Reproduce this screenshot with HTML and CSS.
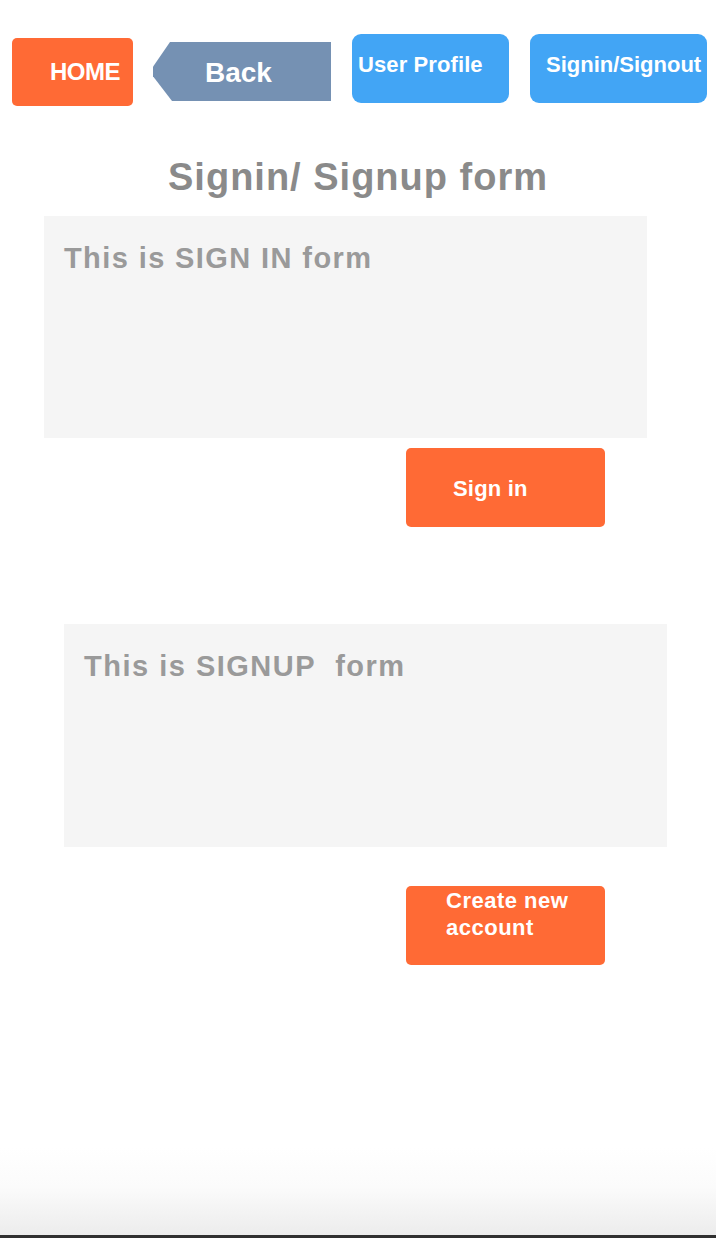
FILE: index.html
```html
<!DOCTYPE html>
<html>
<head>
<meta charset="utf-8">
<title>Signin/ Signup form</title>
<link rel="stylesheet" href="styles.css">
</head>
<body>
<div class="page">
  <nav class="nav">
    <a class="btn-home">HOME</a>
    <a class="btn-back">Back</a>
    <a class="btn-blue btn-profile">User Profile</a>
    <a class="btn-blue btn-sign">Signin/Signout</a>
  </nav>
  <h1 class="title">Signin/ Signup form</h1>
  <section class="form-box form-signin">
    <p class="form-text">This is SIGN IN form</p>
  </section>
  <div class="action">
    <button class="btn-orange btn-signin">Sign in</button>
  </div>
  <section class="form-box form-signup">
    <p class="form-text">This is SIGNUP&nbsp; form</p>
  </section>
  <div class="action action-create">
    <button class="btn-orange btn-create"><span class="create-label">Create new account</span></button>
  </div>
  <footer class="bottom"></footer>
</div>
</body>
</html>
```
FILE: styles.css
```css
* { box-sizing: border-box; }
html, body { margin: 0; padding: 0; background: #fff; }
body { font-family: "Liberation Sans", Arial, sans-serif; }

.page {
  min-height: 100vh;
  display: flex;
  flex-direction: column;
}

.nav {
  display: flex;
  align-items: flex-start;
  padding: 34px 0 0 12px;
  height: 107px;
}

.btn-home {
  margin-top: 4px;
  width: 121px;
  height: 68px;
  background: #ff6a35;
  border-radius: 5px;
  color: #fff;
  font-weight: bold;
  font-size: 24px;
  display: flex;
  align-items: center;
  padding-left: 38px;
  letter-spacing: -0.5px;
}

.btn-back {
  margin-top: 8px;
  margin-left: 19px;
  width: 179px;
  height: 59px;
  background: #7591b3;
  clip-path: polygon(18px 0, 100% 0, 100% 100%, 20px 100%, 1px 58%, 1px 42%);
  color: #fff;
  font-weight: bold;
  font-size: 28px;
  display: flex;
  align-items: center;
  padding-left: 53px;
  padding-top: 2px;
}

.btn-blue {
  height: 69px;
  background: #42a5f5;
  border-radius: 9px;
  color: #fff;
  font-weight: bold;
  font-size: 22px;
  display: flex;
  align-items: center;
  padding-bottom: 8px;
  letter-spacing: 0;
}

.btn-profile {
  margin-left: 21px;
  width: 157px;
  padding-left: 6px;
  letter-spacing: 0.1px;
}

.btn-sign {
  margin-left: 21px;
  width: 177px;
  padding-left: 16px;
  letter-spacing: 0;
}

.title {
  margin: 48px 0 0;
  font-size: 38px;
  line-height: 44px;
  font-weight: bold;
  color: #8a8a8a;
  text-align: center;
  letter-spacing: 1px;
}

.form-box {
  background: #f5f5f5;
  width: 603px;
  height: 222px;
  padding: 25px 20px 0;
}

.form-signin {
  margin: 17px 0 0 44px;
}

.form-signup {
  margin: 97px 0 0 64px;
  height: 223px;
}

.form-text {
  margin: 0;
  font-size: 29px;
  line-height: 34px;
  font-weight: bold;
  color: #9a9a9a;
  letter-spacing: 1.4px;
}

.form-signup .form-text {
  letter-spacing: 1.5px;
}

.action {
  display: flex;
  padding-left: 406px;
  margin-top: 10px;
}

.action-create {
  margin-top: 39px;
}

.btn-orange {
  border: 0;
  width: 199px;
  height: 79px;
  background: #ff6a35;
  border-radius: 5px;
  color: #fff;
  font-family: "Liberation Sans", Arial, sans-serif;
  font-weight: bold;
  font-size: 22px;
  text-align: left;
  display: flex;
  margin: 0;
}

.btn-signin {
  align-items: center;
  padding: 2px 0 0 47px;
  letter-spacing: 0.2px;
}

.btn-create {
  align-items: flex-start;
  padding: 1px 0 0 40px;
}

.create-label {
  display: block;
  width: 135px;
  line-height: 27px;
  font-size: 22px;
  letter-spacing: 0.5px;
  font-weight: bold;
}

.bottom {
  margin-top: auto;
  height: 90px;
  background: linear-gradient(to bottom, #ffffff 0%, #fbfbfb 45%, #ececec 100%);
  border-bottom: 3px solid #303030;
}
```
